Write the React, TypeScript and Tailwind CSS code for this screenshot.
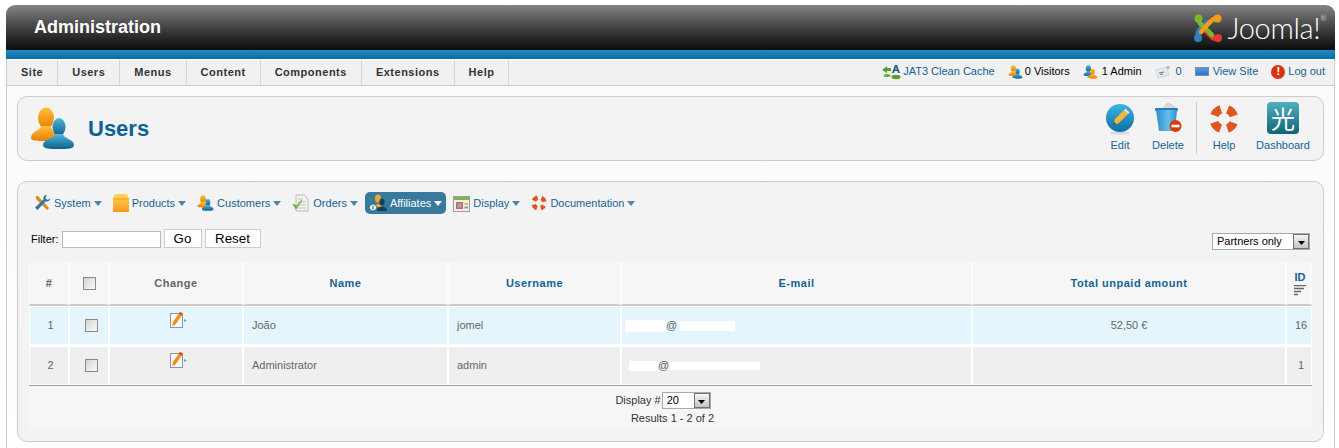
import React from 'react';

const tabs = ['Site', 'Users', 'Menus', 'Content', 'Components', 'Extensions', 'Help'];

function People({ className = '', swap = false, id }: { className?: string; swap?: boolean; id: string }) {
  const back = swap ? ['#4fb6dc', '#0d6288'] : ['#ffc23a', '#e87e04'];
  const front = swap ? ['#ffc23a', '#e87e04'] : ['#4fb6dc', '#0d6288'];
  return (
    <svg viewBox="0 0 45 43" className={className}>
      <defs>
        <linearGradient id={`${id}b`} x1="0" y1="0" x2="0" y2="1">
          <stop offset="0" stopColor={back[0]} />
          <stop offset="1" stopColor={back[1]} />
        </linearGradient>
        <linearGradient id={`${id}f`} x1="0" y1="0" x2="0" y2="1">
          <stop offset="0" stopColor={front[0]} />
          <stop offset="1" stopColor={front[1]} />
        </linearGradient>
      </defs>
      <ellipse cx="16" cy="11" rx="8" ry="10.5" fill={`url(#${id}b)`} />
      <path d="M11 19 C10 24 1 24 1 31 C1 34 8 34 16 34 C24 34 27 32 27 27 C24 25 21 23 21 19 Z" fill={`url(#${id}b)`} />
      <ellipse cx="29" cy="20" rx="6.5" ry="9" fill={`url(#${id}f)`} />
      <path d="M25 27 C24 32 13 32 13 38 C13 42 20 42 29 42 C38 42 44 42 44 38 C44 32 34 32 33 27 Z" fill={`url(#${id}f)`} />
    </svg>
  );
}

function Lifebuoy({ className = '' }: { className?: string }) {
  return (
    <svg viewBox="0 0 28 28" className={className}>
      <circle cx="14" cy="14" r="9.5" fill="none" stroke="#f2f0ee" strokeWidth="8" />
      <circle cx="14" cy="14" r="9.5" fill="none" stroke="#e0561c" strokeWidth="8" strokeDasharray="8.5 6.42" strokeDashoffset="4.25" transform="rotate(45 14 14)" />
    </svg>
  );
}

function JoomlaMark() {
  return (
    <svg viewBox="0 0 30 30" className="h-[30px] w-[30px]">
      <g fill="none" strokeWidth="4.6" strokeLinecap="round">
        <path d="M24 25 C20 27 18 23 15 20 L10 15" stroke="#e8352e" />
        <path d="M6 24 C3 20 6 17 9 14 L14 9" stroke="#2f7fc4" />
        <path d="M6 6 C5 11 9 12 12 15 L19 22" stroke="#7ab82e" />
        <path d="M25 6 C21 4 18 8 15 11 L8 19" stroke="#f49a1c" />
      </g>
      <circle cx="5.5" cy="5.5" r="4" fill="#7ab82e" />
      <circle cx="24.5" cy="5.5" r="4" fill="#f49a1c" />
      <circle cx="5" cy="25" r="4" fill="#2f7fc4" />
      <circle cx="25" cy="25" r="4" fill="#e8352e" />
    </svg>
  );
}

function CacheIcon() {
  return (
    <svg viewBox="0 0 20 16" className="h-4 w-5">
      <path d="M1 6 L6 2 L6 4 L10 4 L10 7 L6 7 L6 9 Z" fill="#5aa02c" />
      <ellipse cx="6" cy="11.5" rx="3.5" ry="1.6" fill="#6bb03a" />
      <ellipse cx="15" cy="13" rx="4.5" ry="2.2" fill="#5aa02c" />
      <path d="M11 9 L14 1 L16 1 L19 9 L17 9 L16.4 7 L13.6 7 L13 9 Z M14.2 5.5 L15.8 5.5 L15 3 Z" fill="#2c5a86" fillRule="evenodd" />
    </svg>
  );
}

function MailIcon() {
  return (
    <svg viewBox="0 0 16 14" className="h-[14px] w-4">
      <path d="M1 5 L12 2 L14 10 L3 13 Z" fill="#e6e8ea" stroke="#c8cccf" strokeWidth="0.6" />
      <path d="M4 8 L9 7 M5 9.5 L8 9" stroke="#5f8aa8" strokeWidth="1.2" />
      <circle cx="13" cy="2.5" r="1.2" fill="none" stroke="#6d97b3" strokeWidth="0.7" />
    </svg>
  );
}

function Caret({ white = false }: { white?: boolean }) {
  return (
    <svg viewBox="0 0 8 5" className="h-[5px] w-2">
      <path d="M0 0 H8 L4 5 Z" fill={white ? '#ffffff' : '#4a87ab'} />
    </svg>
  );
}

function ToolsIcon() {
  return (
    <svg viewBox="0 0 18 18" className="h-[18px] w-[18px]">
      <path d="M3 2 L5 2 L16 14 L14 16 L3 5 Z" fill="#e08a1e" />
      <path d="M14 1 C11 1 10 3 10.5 5.5 L2 13.5 L4.5 16 L12.5 7.5 C15 8 17 7 17 4 L15 6 L13 5 L12.5 3 Z" fill="#2b79a8" />
    </svg>
  );
}

function BoxIcon() {
  return (
    <svg viewBox="0 0 16 18" className="h-[18px] w-4">
      <defs>
        <linearGradient id="boxg" x1="0" y1="0" x2="0" y2="1">
          <stop offset="0" stopColor="#ffd45e" />
          <stop offset="1" stopColor="#f79a1a" />
        </linearGradient>
      </defs>
      <path d="M2 0 H14 L16 5 V18 H0 V5 Z" fill="url(#boxg)" />
      <path d="M0 5 H16" stroke="#f0a020" strokeWidth="1" />
    </svg>
  );
}

function OrdersIcon() {
  return (
    <svg viewBox="0 0 18 18" className="h-[18px] w-[18px]">
      <path d="M4 1 H12 L16 5 V17 H4 Z" fill="#f2f2ee" stroke="#a9aeb0" strokeWidth="0.8" />
      <path d="M6 5 H11 M6 8 H14 M6 11 H14 M6 14 H14" stroke="#b9bdbf" strokeWidth="0.9" />
      <path d="M1 10 L4 15 L10 6 L4.5 12 Z" fill="#6cab2e" stroke="#6cab2e" strokeWidth="0.8" />
    </svg>
  );
}

function AffiliateIcon() {
  return (
    <svg viewBox="0 0 18 18" className="h-[18px] w-[18px]">
      <ellipse cx="9" cy="4.5" rx="3" ry="4" fill="#f5a623" />
      <path d="M5 13 C5 9 13 9 13 13 Z" fill="#f5a623" />
      <ellipse cx="13" cy="8" rx="2.6" ry="3.4" fill="#173f58" />
      <path d="M8 17 C8 11 18 11 18 17 Z" fill="#173f58" />
      <circle cx="4" cy="13.5" r="3.6" fill="#f4f4f4" stroke="#24506c" strokeWidth="0.8" />
      <path d="M4 11.5 V15.5" stroke="#24506c" strokeWidth="1" />
    </svg>
  );
}

function DisplayIcon() {
  return (
    <svg viewBox="0 0 17 17" className="h-[17px] w-[17px]">
      <rect x="0.5" y="1.5" width="16" height="15" fill="#eef0ee" stroke="#9aa0a2" />
      <rect x="1" y="2" width="15" height="3" fill="#79b84c" />
      <rect x="3" y="7" width="7" height="7" fill="#d9604f" />
      <rect x="4.5" y="8.5" width="4" height="4" fill="#7fb2d3" />
      <rect x="11.5" y="8" width="3.5" height="2" fill="#e9b23a" />
      <rect x="11.5" y="11.5" width="3.5" height="2" fill="#6fa0c4" />
    </svg>
  );
}

function ChangeIcon() {
  return (
    <svg viewBox="0 0 17 16" className="h-4 w-[17px]">
      <path d="M14 7 L17 8.5 L14 10 Z" fill="#9a9a9a" />
      <rect x="0.5" y="1.5" width="12" height="14" fill="#f6f7fa" stroke="#8f959c" />
      <path d="M2 14 L3 10 L10 0 L13 1.5 L5.5 12.5 Z" fill="#f08c1a" />
      <path d="M10 0 L13 1.5 L11.8 3.4 L8.8 1.8 Z" fill="#d8501e" />
    </svg>
  );
}

function Checkbox({ className = '' }: { className?: string }) {
  return (
    <span className={`block h-[13px] w-[13px] border border-[#8a8a8a] bg-gradient-to-br from-[#d4d4d4] to-[#fafafa] p-0 ${className}`} />
  );
}

function FakeSelect({ label, className = '' }: { label: string; className?: string }) {
  return (
    <div className={`flex h-[17px] items-stretch border border-[#a9a9a9] bg-white ${className}`}>
      <span className="flex-1 pl-1 text-[11px] leading-[15px] text-black">{label}</span>
      <span className="flex w-4 items-center justify-center border border-[#707070] bg-gradient-to-b from-[#f4f4f4] to-[#c4c4c4]">
        <svg viewBox="0 0 7 4" className="mt-[3px] h-1 w-[7px]">
          <path d="M0 0 H7 L3.5 4 Z" fill="#000" />
        </svg>
      </span>
    </div>
  );
}

function ToolButton({ label, width, children }: { label: string; width: string; children: React.ReactNode }) {
  return (
    <a className={`flex flex-col items-center ${width}`}>
      <span className="flex h-[34px] items-start justify-center">{children}</span>
      <span className="mt-[3px] text-[11px] leading-[13px] text-[#146295]">{label}</span>
    </a>
  );
}

const navItems: { label: string; icon: React.ReactNode; active?: boolean }[] = [
  { label: 'System', icon: <ToolsIcon /> },
  { label: 'Products', icon: <BoxIcon /> },
  { label: 'Customers', icon: <People id="navc" className="h-[16px] w-[17px]" /> },
  { label: 'Orders', icon: <OrdersIcon /> },
  { label: 'Affiliates', icon: <AffiliateIcon />, active: true },
  { label: 'Display', icon: <DisplayIcon /> },
  { label: 'Documentation', icon: <Lifebuoy className="h-4 w-4" /> },
];

const th = 'h-[44px] border-x border-b-2 border-x-[#fcfcfc] border-b-[#cccccc] bg-[#f6f6f6] text-center text-[11px] font-bold tracking-[0.5px]';

function UserRow({ n, name, username, email, amount, id, tone, last }: {
  n: number;
  name: string;
  username: string;
  email: React.ReactNode;
  amount?: string;
  id: number;
  tone: string;
  last?: boolean;
}) {
  const td = `${last ? 'h-[39px] border-b' : 'h-[40px] border-b-2'} border-t border-x border-white ${tone} text-[11px] text-[#666666]`;
  return (
    <tr>
      <td className={`${td} pl-[3px] text-center`}>{n}</td>
      <td className={td}>
        <Checkbox className="ml-[15px]" />
      </td>
      <td className={`${td} pt-[5px] align-top`}>
        <span className="flex justify-center pl-[4px]">
          <ChangeIcon />
        </span>
      </td>
      <td className={`${td} pl-2`}>{name}</td>
      <td className={`${td} pl-2`}>{username}</td>
      <td className={td}>{email}</td>
      <td className={`${td} text-center`}>{amount}</td>
      <td className={`${td} pl-1 text-center`}>{id}</td>
    </tr>
  );
}

export default function App() {
  return (
    <div className="h-[448px] w-[1339px] overflow-hidden bg-white pt-[5px] pl-[6px] font-['Liberation_Sans',Arial,sans-serif]">
      <div className="flex h-[443px] w-[1329px] flex-col">
        {/* Header */}
        <div className="flex h-[45px] items-center justify-between rounded-t-[9px] bg-gradient-to-b from-[#858585] to-[#0c0c0c] pr-[9px] pl-[28px]">
          <h1 className="text-[18px] font-bold text-white">Administration</h1>
          <div className="flex items-center gap-[5px]">
            <JoomlaMark />
            <span className="flex font-['Lato',sans-serif] text-[29px] leading-none font-light tracking-[-0.3px] text-white">
              Joomla!<span className="mt-[2px] text-[7px] leading-none">®</span>
            </span>
          </div>
        </div>
        <div className="h-[9px] bg-gradient-to-b from-[#1e8ac6] to-[#0b6ea3]" />

        <div className="flex flex-1 flex-col border-x border-[#cccccc] bg-gradient-to-b from-[#fafafa] to-white pt-px">
          {/* Menu bar */}
          <div className="flex h-[26px] items-stretch justify-between border-b border-[#cccccc] bg-[#f1f1f1] pr-[9px] text-[11px]">
            <nav className="flex">
              {tabs.map((tab) => (
                <a key={tab} className="flex items-center border-r border-[#d6d6d6] px-[14px] font-bold tracking-[0.5px] text-[#333333]">
                  {tab}
                </a>
              ))}
            </nav>
            <div className="flex items-center pb-[2px]">
              <span className="mr-[13px] flex items-center gap-[2px] text-[#146295]">
                <CacheIcon /> JAT3 Clean Cache
              </span>
              <span className="mr-[13px] flex items-center gap-[2px] text-black">
                <People id="stv" className="h-[14px] w-[15px]" /> 0 Visitors
              </span>
              <span className="mr-[13px] flex items-center gap-[4px] text-black">
                <People id="sta" swap className="h-[14px] w-[15px]" /> 1 Admin
              </span>
              <span className="mr-[13px] flex items-center gap-[5px] text-[#146295]">
                <MailIcon /> 0
              </span>
              <span className="mr-[13px] flex items-center gap-[4px] text-[#146295]">
                <span className="h-[9px] w-[14px] border border-[#7a8ea0] bg-gradient-to-b from-[#4f9de6] to-[#2f72cc]" /> View Site
              </span>
              <span className="flex items-center gap-[3px] text-[#146295]">
                <span className="flex h-[14px] w-[14px] items-center justify-center rounded-full bg-[#d9340f] text-[11px] leading-none font-bold text-white">!</span> Log out
              </span>
            </div>
          </div>

          {/* Toolbar panel */}
          <div className="mx-[10px] mt-[10px] flex h-[65px] items-center justify-between rounded-[10px] border border-[#cccccc] bg-[#f3f3f3] pr-[4px] pl-[12px]">
            <div className="flex items-center">
              <People id="ttl" className="h-[43px] w-[45px]" />
              <h2 className="ml-[13px] text-[22px] font-bold text-[#0b6295]">Users</h2>
            </div>
            <div className="flex h-[53px] items-start">
              <ToolButton label="Edit" width="w-[48px]">
                <svg viewBox="0 0 28 32" className="mt-[2px] h-8 w-7">
                  <defs>
                    <linearGradient id="edg" x1="0" y1="0" x2="0" y2="1">
                      <stop offset="0" stopColor="#3fb3e4" />
                      <stop offset="1" stopColor="#0a6fa8" />
                    </linearGradient>
                  </defs>
                  <ellipse cx="14" cy="29" rx="10" ry="1.6" fill="#d8d8d8" />
                  <circle cx="14" cy="14" r="14" fill="url(#edg)" />
                  <path d="M7 21 L9 15 L18 6 L22 10 L13 19 Z" fill="#f6b73c" />
                  <path d="M18 6 L19.5 4.5 L23.5 8.5 L22 10 Z" fill="#dfe4e8" />
                  <path d="M7 21 L8 18 L10 20 Z" fill="#333" />
                </svg>
              </ToolButton>
              <ToolButton label="Delete" width="w-[48px]">
                <svg viewBox="0 0 28 32" className="h-8 w-7">
                  <defs>
                    <linearGradient id="bin" x1="0" y1="0" x2="1" y2="0">
                      <stop offset="0" stopColor="#2b8fc9" />
                      <stop offset="0.6" stopColor="#66bdec" />
                      <stop offset="1" stopColor="#2f93cc" />
                    </linearGradient>
                  </defs>
                  <path d="M9 6 L14 1 L21 5 L20 8 L10 8 Z" fill="#dcdcdc" stroke="#aaa" strokeWidth="0.5" />
                  <rect x="1" y="6" width="23" height="3" rx="1" fill="#1f7fb8" />
                  <path d="M2 8 H23 L21 29 H5 Z" fill="url(#bin)" />
                  <circle cx="21.5" cy="24" r="6" fill="#d8390f" />
                  <rect x="17.5" y="22.7" width="8" height="2.6" fill="#fff" />
                </svg>
              </ToolButton>
              <div className="mx-[4px] h-[52px] w-px bg-[#cccccc]" />
              <ToolButton label="Help" width="w-[46px]">
                <Lifebuoy className="mt-[2px] h-[30px] w-[30px]" />
              </ToolButton>
              <ToolButton label="Dashboard" width="w-[72px]">
                <span className="flex h-8 w-8 items-center justify-center rounded-[4px] bg-gradient-to-b from-[#4fb0c2] to-[#0f6478] font-['Noto_Sans_CJK_SC',sans-serif] text-[24px] leading-none text-white">
                  光
                </span>
              </ToolButton>
            </div>
          </div>

          {/* Affiliates panel */}
          <div className="mx-[10px] mt-[20px] flex h-[261px] flex-col rounded-[10px] border border-[#cccccc] bg-[#f3f3f3] px-[11px] pt-[10px]">
            <nav className="flex h-[22px] gap-[3px]">
              {navItems.map((item) => (
                <a
                  key={item.label}
                  className={`flex items-center gap-[3px] rounded-[5px] px-1 text-[11px] ${item.active ? 'bg-[#387a9e] text-white' : 'text-[#146295]'}`}
                >
                  {item.icon}
                  <span>{item.label}</span>
                  <Caret white={item.active} />
                </a>
              ))}
            </nav>

            <div className="mt-[15px] flex h-[21px] items-start justify-between pr-[2px] pl-[2px]">
              <div className="flex h-[19px] items-end">
                <label className="text-[11px] leading-[17px] text-black">Filter:</label>
                <input type="text" className="ml-[3px] h-[17px] w-[99px] border border-[#bbbbbb] bg-white" />
                <button type="button" className="ml-[3px] h-[19px] w-[38px] border border-[#cccccc] bg-white text-[13.33px] leading-none text-black">Go</button>
                <button type="button" className="ml-[3px] h-[19px] w-[56px] border border-[#cccccc] bg-white text-[13.33px] leading-none text-black">Reset</button>
              </div>
              <FakeSelect label="Partners only" className="mt-[4px] w-[98px]" />
            </div>

            <table className="mt-[12px] w-[1283px] table-fixed border-separate border-spacing-0">
              <colgroup>
                <col className="w-[40px]" />
                <col className="w-[40px]" />
                <col className="w-[134px]" />
                <col className="w-[205px]" />
                <col className="w-[173px]" />
                <col className="w-[351px]" />
                <col className="w-[314px]" />
                <col className="w-[26px]" />
              </colgroup>
              <thead>
                <tr>
                  <th className={`${th} text-[#666666]`}>#</th>
                  <th className={th}>
                    <Checkbox className="ml-[13px]" />
                  </th>
                  <th className={`${th} text-[#666666]`}>Change</th>
                  <th className={`${th} text-[#146295]`}>Name</th>
                  <th className={`${th} text-[#146295]`}>Username</th>
                  <th className={`${th} text-[#146295]`}>E-mail</th>
                  <th className={`${th} text-[#146295]`}>Total unpaid amount</th>
                  <th className={`${th} text-[#146295]`}>
                    <span className="flex flex-col items-center pl-[2px]">
                      <span className="leading-[13px] tracking-normal">ID</span>
                      <svg viewBox="0 0 12 11" className="mt-px h-[11px] w-3">
                        <path d="M0 0.5 H12 M0 3.5 H10 M0 6.5 H7 M0 9.5 H4" stroke="#666" strokeWidth="1.4" />
                      </svg>
                    </span>
                  </th>
                </tr>
              </thead>
              <tbody>
                <UserRow
                  n={1}
                  name="João"
                  username="jomel"
                  amount="52,50 €"
                  id={16}
                  tone="bg-[#e5f5fd]"
                  email={
                    <span className="flex items-center pl-[3px]">
                      <span className="h-[12px] w-[41px] bg-white" />
                      <span>@</span>
                      <span className="ml-[3px] h-[10px] w-[55px] bg-white" />
                    </span>
                  }
                />
                <UserRow
                  n={2}
                  name="Administrator"
                  username="admin"
                  id={1}
                  tone="bg-[#efefef]"
                  last
                  email={
                    <span className="flex items-center pl-[7px]">
                      <span className="h-[10px] w-[29px] bg-white" />
                      <span>@</span>
                      <span className="ml-px h-[8px] w-[90px] bg-white" />
                    </span>
                  }
                />
              </tbody>
              <tfoot>
                <tr>
                  <td colSpan={8} className="h-[45px] border-t border-[#999999] bg-[#f6f6f6] text-[11px] text-[#333333]">
                    <div className="flex flex-col items-center">
                      <div className="flex items-center pr-[15px]">
                        <span>Display #</span>
                        <FakeSelect label="20" className="ml-px w-[49px]" />
                      </div>
                      <div className="mt-[3px] pl-[4px] leading-[13px]">Results 1 - 2 of 2</div>
                    </div>
                  </td>
                </tr>
              </tfoot>
            </table>
          </div>
        </div>
      </div>
    </div>
  );
}
